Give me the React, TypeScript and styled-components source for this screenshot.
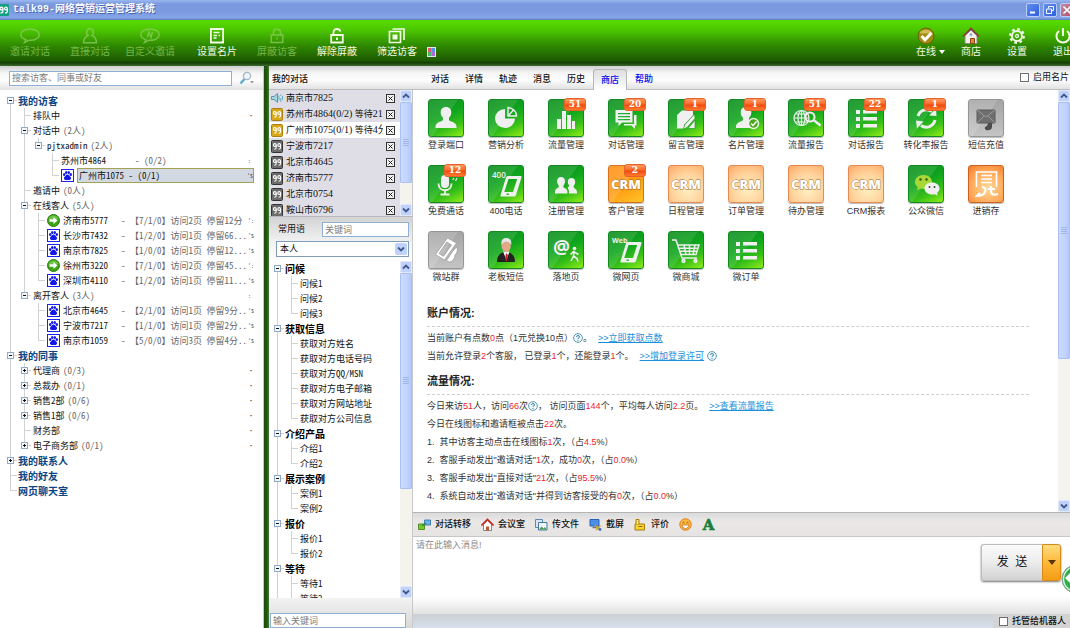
import React from "react";
import styled, { createGlobalStyle, css } from "styled-components";

const sans = `"Liberation Sans", "Noto Sans CJK SC", sans-serif`;
const mono = `"Noto Sans Mono CJK SC", "Noto Sans CJK SC", monospace`;
const serif = `"Liberation Serif", "Noto Sans CJK SC", serif`;

const Global = createGlobalStyle`
  * { box-sizing: border-box; }
  html, body { margin: 0; height: 100%; overflow: hidden; background: #fff; }
  body { font: 9px/15px ${sans}; color: #111; }
  #root { height: 100%; }
  ul, ol { list-style: none; margin: 0; padding: 0; }
  button { font: inherit; color: inherit; border: 0; padding: 0; background: none; cursor: pointer; }
  input, select, textarea { font: inherit; color: inherit; margin: 0; border-radius: 0; }
  svg { display: block; flex: none; }
`;

const Window = styled.div`
  display: flex;
  flex-direction: column;
  height: 100vh;
  overflow: hidden;
`;

/* ---------- title bar ---------- */

const TitleBar = styled.header`
  display: flex;
  align-items: center;
  flex: none;
  height: 20px;
  background: linear-gradient(#9ab8f0, #7a98de 20%, #7b9ae0 60%, #86a6ea 90%, #5878b8);
  overflow: hidden;
`;

const AppName = styled.h1`
  flex: 1;
  margin: 0 0 0 4px;
  font: bold 10px/18px "Liberation Mono", "Noto Sans CJK SC", monospace;
  color: #f4f8ff;
  text-shadow: 1px 1px 0 #4a66b0;
`;

const WindowButtons = styled.div`
  display: flex;
  gap: 3px;
  margin-right: -4px;
`;

const WindowButton = styled.button<{ $close?: boolean }>`
  display: grid;
  place-items: center;
  width: 14px;
  height: 14px;
  border: 1px solid #b8cdf8;
  border-radius: 2px;
  background: ${(p) =>
    p.$close ? "linear-gradient(135deg, #c98aa0, #a8506c)" : "linear-gradient(135deg, #5f8df2, #2f5fdc)"};
`;

/* ---------- main toolbar ---------- */

const Toolbar = styled.nav`
  display: flex;
  flex: none;
  height: 46px;
  background: linear-gradient(#58dc00, #4cc600 22%, #2f8a00 55%, #1d5a02 88%, #123c04 93%, #3f6b30);
`;

const ToolGroup = styled.div`
  display: flex;
  margin-right: 7px;
`;

const ToolSpacer = styled.div`
  flex: 1;
`;

const RightTools = styled.div`
  display: flex;
  margin-right: -16px;
`;

const Tool = styled.button<{ $width?: number; $start?: boolean }>`
  display: flex;
  flex-direction: column;
  align-items: ${(p) => (p.$start ? "flex-start" : "center")};
  flex: none;
  width: ${(p) => p.$width ?? 60}px;
  padding-top: 7px;
  font-size: 10px;
  line-height: 14px;
  white-space: nowrap;
  color: #f2fbe6;
  &:disabled {
    color: #8ccc64;
    opacity: 0.75;
  }
`;

const ToolIcon = styled.span`
  display: grid;
  place-items: center;
  width: 20px;
  height: 18px;
`;

const ToolLabel = styled.span`
  display: flex;
  align-items: center;
  gap: 3px;
`;

const PaletteButton = styled.button`
  align-self: flex-end;
  padding-bottom: 9px;
`;

/* ---------- workspace ---------- */

const Workspace = styled.div`
  display: flex;
  flex: 1;
  min-height: 0;
`;

const barFill = "linear-gradient(#cfcfcf, #f6f6f6 30%, #fdfdfd 60%, #e2e2e2)";

const VisitorPanel = styled.aside`
  flex: none;
  width: 264px;
  border-right: 1px solid #c4c8c0;
  background: #fff;
`;

const SearchBar = styled.form`
  display: flex;
  align-items: center;
  gap: 7px;
  height: 24px;
  padding: 0 9px;
  background: ${barFill};
`;

const TextInput = styled.input`
  min-width: 0;
  height: 15px;
  padding: 0 2px;
  border: 1px solid #8fb0d4;
  background: #fff;
  line-height: 13px;
  outline: 0;
  &::placeholder {
    color: #7c7c7c;
    opacity: 1;
  }
`;

const SearchInput = styled(TextInput)`
  width: 224px;
`;

const Divider = styled.div`
  flex: none;
  width: 5px;
  background: linear-gradient(90deg, #1c4a0a, #1f5c0a 60%, #4c7a3c);
`;

/* ---------- trees ---------- */

const Tree = styled.ul`
  padding: 3px 9px 0 4px;
  font-family: ${mono};
`;

const TreeRow = styled.li`
  display: flex;
  align-items: center;
  height: 15px;
  white-space: nowrap;
`;

const line = "linear-gradient(#d2d2d2, #d2d2d2) no-repeat";
const guides: Record<string, string> = {
  " ": "none",
  "|": `${line} 6px 0 / 1px 100%`,
  T: `${line} 6px 0 / 1px 100%, ${line} 6px 7px / 7px 1px`,
  L: `${line} 6px 0 / 1px 8px, ${line} 6px 7px / 7px 1px`,
  F: `${line} 6px 7px / 1px 8px, ${line} 6px 7px / 7px 1px`,
};

const Guide = styled.span<{ $kind: string }>`
  display: flex;
  align-items: center;
  flex: none;
  width: 14px;
  height: 15px;
  padding-left: 3px;
  background: ${(p) => guides[p.$kind]};
`;

const Toggle = styled.button`
  display: block;
  width: 7px;
  height: 7px;
`;

const TreeText = styled.span<{ $heading?: string }>`
  display: flex;
  align-items: center;
  gap: 3px;
  flex: 1;
  min-width: 0;
  padding-left: 1px;
  ${(p) =>
    p.$heading &&
    css`
      padding-left: 0;
      font-weight: bold;
      font-size: 10px;
      color: ${p.$heading};
    `}
`;

const VisitorName = styled.span<{ $wide?: boolean }>`
  flex: none;
  width: ${(p) => (p.$wide ? 71 : 55)}px;
`;

const Muted = styled.span`
  color: #666;
`;

const Mark = styled.span`
  flex: none;
  width: 6px;
  font-size: 6px;
  color: #333;
`;

const Selected = styled.span`
  display: flex;
  align-items: center;
  flex: 1;
  height: 15px;
  border: 1px solid #a3a356;
  background: #d3d9e3;
  line-height: 13px;
`;

/* ---------- scrollbars ---------- */

const ScrollTrack = styled.div`
  display: flex;
  flex-direction: column;
  flex: none;
  width: 12px;
  background: #f4f3ee;
`;

const ScrollArrow = styled.button`
  display: grid;
  place-items: center;
  flex: none;
  height: 12px;
  border: 1px solid #dfe8fd;
  border-radius: 2px;
  background: #c0d2fa;
`;

const ScrollThumb = styled.div<{ $grow: number }>`
  display: grid;
  place-items: center;
  flex: ${(p) => p.$grow} 0 0;
  border: 1px solid #a9c0f0;
  border-radius: 1px;
  background: linear-gradient(90deg, #cbdafd, #c2d4fc 60%, #b2c8f6);
`;

const ScrollRest = styled.div<{ $grow: number }>`
  flex: ${(p) => p.$grow} 0 0;
`;

/* ---------- conversations and phrases ---------- */

const Main = styled.div`
  display: flex;
  flex-direction: column;
  flex: 1;
  min-width: 0;
`;

const HeaderBar = styled.div`
  display: flex;
  align-items: flex-end;
  flex: none;
  height: 24px;
  background: ${barFill};
  border-bottom: 1px solid #bdbdbd;
`;

const PanelTitle = styled.h2`
  flex: none;
  width: 154px;
  margin: 0;
  padding-left: 3px;
  font: 500 9px/20px ${sans};
`;

const Columns = styled.div`
  display: flex;
  flex: 1;
  min-height: 0;
`;

const TalkPanel = styled.section`
  display: flex;
  flex-direction: column;
  flex: none;
  width: 144px;
  border-right: 1px solid #c9c9c9;
`;

const TalkArea = styled.div`
  display: flex;
  flex: none;
  height: 127px;
  overflow: hidden;
  border-bottom: 1px solid #b8b8c0;
`;

const TalkList = styled.ul`
  flex: 1;
  min-width: 0;
  background: #dfdee6;
`;

const TalkRow = styled.li<{ $active?: boolean }>`
  display: flex;
  align-items: center;
  gap: 3px;
  height: 16px;
  padding: 0 5px 0 2px;
  background: ${(p) => (p.$active ? "#fff" : "transparent")};
`;

const TalkName = styled.span`
  flex: 1;
  min-width: 0;
  overflow: hidden;
  white-space: nowrap;
  font-family: ${serif};
`;

const Figures = styled.span`
  font-size: 10px;
`;

const PhraseTools = styled.div`
  display: grid;
  grid-template-columns: 46px 1fr;
  grid-template-rows: 15px 16px;
  gap: 4px 0;
  flex: none;
  height: 44px;
  padding: 5px 3px 0 7px;
  background: linear-gradient(#d3d3d3, #f4f4f4 60%, #fff);
`;

const PhraseLabel = styled.label`
  padding-left: 2px;
`;

const PhraseSelect = styled.select`
  appearance: none;
  height: 16px;
  padding: 0 3px;
  border: 1px solid #7f9db9;
  background: #fff;
`;

const SelectBox = styled.div`
  display: grid;
  grid-column: 1 / 3;
  align-items: center;
  & > * { grid-area: 1 / 1; }
`;

const SelectArrow = styled.span`
  display: grid;
  place-items: center;
  justify-self: end;
  width: 12px;
  height: 12px;
  margin-right: 2px;
  border-radius: 2px;
  background: #c0d2fa;
  pointer-events: none;
`;

const PhraseArea = styled.div`
  display: flex;
  flex: 1;
  min-height: 0;
`;

const PhraseTree = styled(Tree)`
  flex: 1;
  padding: 0 0 0 2px;
  overflow: hidden;
`;

const PhraseFooter = styled.div`
  display: flex;
  align-items: flex-end;
  flex: none;
  height: 30px;
  padding: 0 6px 0 1px;
  background: linear-gradient(#f2f2f2, #d8d8d8);
  & > input { flex: 1; }
`;

/* ---------- shop page ---------- */

const Tabs = styled.div`
  display: flex;
  align-items: flex-end;
  flex: 1;
  height: 23px;
`;

const Tab = styled.button<{ $active?: boolean; $link?: boolean }>`
  width: 34px;
  height: 20px;
  font-weight: 500;
  color: ${(p) => (p.$link ? "#0a0af0" : "#111")};
  ${(p) =>
    p.$active &&
    css`
      height: 21px;
      margin-bottom: -1px;
      border: 1px solid #b5b5b5;
      border-bottom: 0;
      border-radius: 3px 3px 0 0;
      background: linear-gradient(#dedede, #fff);
    `}
`;

const CheckLabel = styled.label`
  display: flex;
  align-items: center;
  gap: 4px;
  white-space: nowrap;
  & > input {
    appearance: none;
    width: 9px;
    height: 9px;
    border: 1px solid #6f6f6f;
    background: #fff;
  }
`;

const CardCheck = styled(CheckLabel)`
  height: 23px;
  padding-right: 1px;
`;

const ChatPanel = styled.section`
  display: flex;
  flex-direction: column;
  flex: 1;
  min-width: 0;
`;

const ShopArea = styled.div`
  display: flex;
  flex: 1;
  min-height: 0;
`;

const ShopPage = styled.div`
  flex: 1;
  min-width: 0;
  overflow: hidden;
  color: #333;
`;

const Tiles = styled.ul`
  display: grid;
  grid-template-columns: repeat(10, 60px);
  grid-auto-rows: 66px;
  padding: 9px 0 3px 3px;
`;

const Tile = styled.li`
  display: flex;
  flex-direction: column;
  align-items: center;
  line-height: 13px;
  white-space: nowrap;
`;

const tileFill = {
  green: css`
    border: 1px solid #118a22;
    background: linear-gradient(125deg, #ffffff1c 48%, transparent 49%),
      linear-gradient(155deg, #0a8c1c, #10a61e 45%, #38c018 72%, #90ee18);
  `,
  orange: css`
    border: 1px solid #d8701c;
    background: linear-gradient(125deg, #ffffff24 48%, transparent 49%),
      linear-gradient(155deg, #ff8c10, #ff9c14 55%, #ffc428);
  `,
  pale: css`
    border: 1px solid #e88a50;
    background: radial-gradient(circle at 55% 65%, #fff0c4, #ffd29a 55%, #ffa868);
  `,
  gray: css`
    border: 1px solid #969696;
    background: linear-gradient(125deg, #ffffff24 48%, transparent 49%), linear-gradient(#a4a4a4, #c4c4c4);
  `,
  stock: css`
    border: 1px solid #d0601c;
    background: radial-gradient(circle at 55% 60%, #ffd898, #ffa858 60%, #ee7c2c);
  `,
};
type Fill = keyof typeof tileFill;

const TileButton = styled.button<{ $fill: Fill }>`
  position: relative;
  width: 36px;
  height: 38px;
  border-radius: 3px;
  margin-bottom: 2px;
  box-shadow: 0 1px 1px #0004;
  ${(p) => tileFill[p.$fill]}
`;

const Badge = styled.span`
  position: absolute;
  top: -2px;
  right: -3px;
  width: 22px;
  height: 13px;
  border: 1px solid #e8602a;
  border-radius: 3px;
  background: linear-gradient(#ff9a60, #f86a28 45%, #f04a10 55%, #ff7a30);
  color: #fff;
  font: bold 9px/11px "DejaVu Serif", serif;
  text-align: center;
`;

const Report = styled.section`
  margin: 0 29px 3px 14px;
`;

const ReportTitle = styled.h3`
  margin: 0 0 2px;
  border-bottom: 1px dashed #cfcfcf;
  font: bold 11px/26px ${sans};
  color: #222;
`;

const ReportLine = styled.p`
  display: flex;
  align-items: center;
  margin: 0;
  line-height: 18px;
  white-space: pre;
`;

const Red = styled.b`
  font-weight: 500;
  color: #f01c2c;
`;

const ReportLink = styled.a`
  margin: 0 3px 0 6px;
  color: #1a90dc;
  text-decoration: underline;
`;

/* ---------- composer ---------- */

const ComposerTools = styled.div`
  display: flex;
  align-items: center;
  flex: none;
  gap: 10px;
  height: 25px;
  padding-left: 5px;
  border-top: 1px solid #b4b4b4;
  border-bottom: 1px solid #c6c6c6;
  background: linear-gradient(#dcdcdc, #ebe7e7 40%, #e6e3e3);
`;

const ComposerTool = styled.button`
  display: flex;
  align-items: center;
  gap: 4px;
  font-weight: 500;
`;

const Composer = styled.div`
  display: flex;
  align-items: flex-start;
  flex: none;
  height: 60px;
  overflow: hidden;
`;

const Message = styled.textarea`
  flex: 1;
  height: 60px;
  padding: 1px 3px;
  border: 0;
  outline: 0;
  resize: none;
  line-height: 15px;
  &::placeholder {
    color: #8c8c8c;
    opacity: 1;
  }
`;

const SendGroup = styled.div`
  display: flex;
  flex: none;
  height: 37px;
  margin: 7px 0 0;
  border-radius: 3px;
  box-shadow: 0 1px 2px #0008;
`;

const SendButton = styled.button`
  width: 61px;
  border: 1px solid #bcbcbc;
  border-right: 0;
  border-radius: 3px 0 0 3px;
  background: linear-gradient(#fbfbfb, #ececec 50%, #d2d2d2);
  font-size: 12px;
  font-weight: 400;
  white-space: pre;
`;

const SendMore = styled.button`
  display: grid;
  place-items: center;
  width: 19px;
  border: 1px solid #d88a18;
  border-radius: 0 3px 3px 0;
  background: linear-gradient(#ffdc80, #fdb838 50%, #f59c14);
`;

const FloatBall = styled.button`
  flex: none;
  align-self: flex-end;
  width: 30px;
  height: 36px;
  margin-right: -21px;
`;

const ComposerFade = styled.div`
  flex: none;
  height: 17px;
  background: linear-gradient(#fff, #e2e2e2);
`;

const StatusBar = styled.footer`
  display: flex;
  justify-content: flex-end;
  flex: none;
  height: 14px;
  background: linear-gradient(#cdd0d4, #d6dfea);
`;

const RobotCheck = styled(CheckLabel)`
  padding: 0 4px 0 6px;
  background: #d4d4d4;
  font-weight: 500;
`;

/* ---------- small drawings ---------- */

const Chevron = ({ up }: { up?: boolean }) => (
  <svg width="8" height="6" viewBox="0 0 8 6">
    <path d={up ? "M1 4.5 4 1.5 7 4.5" : "M1 1.5 4 4.5 7 1.5"} fill="none" stroke="#40588c" strokeWidth="1.8" />
  </svg>
);

const Scroll = ({ thumb, rest }: { thumb: number; rest: number }) => (
  <ScrollTrack>
    <ScrollArrow aria-label="向上"><Chevron up /></ScrollArrow>
    <ScrollThumb $grow={thumb}>
      <svg width="6" height="7" viewBox="0 0 6 7">
        <path d="M0 .5h6M0 2.5h6M0 4.5h6M0 6.5h6" stroke="#9db6ec" />
      </svg>
    </ScrollThumb>
    <ScrollRest $grow={rest} />
    <ScrollArrow aria-label="向下"><Chevron /></ScrollArrow>
  </ScrollTrack>
);

const ToggleBox = ({ open }: { open: boolean }) => (
  <Toggle aria-label={open ? "折叠" : "展开"}>
    <svg width="7" height="7" viewBox="0 0 7 7">
      <rect x=".5" y=".5" width="6" height="6" fill="#f4f7fb" stroke="#8fa9c6" />
      <path d={open ? "M2 3.5h3" : "M2 3.5h3M3.5 2v3"} stroke="#111" />
    </svg>
  </Toggle>
);

const Paw = () => (
  <svg width="13" height="13" viewBox="0 0 13 13">
    <rect x=".5" y=".5" width="12" height="12" fill="#fff" stroke="#1c22f0" />
    <g fill="#1218e8">
      <ellipse cx="3.2" cy="5.6" rx="1.2" ry="1.5" />
      <ellipse cx="5.2" cy="3.4" rx="1.2" ry="1.5" />
      <ellipse cx="7.8" cy="3.4" rx="1.2" ry="1.5" />
      <ellipse cx="9.8" cy="5.6" rx="1.2" ry="1.5" />
      <path d="M6.5 5.4c1.6 0 2 1.6 3.1 2.7 1 1.2.4 2.8-1 2.8H4.4c-1.4 0-2-1.6-1-2.8C4.5 7 4.9 5.4 6.5 5.4Z" />
    </g>
  </svg>
);

const Direct = () => (
  <svg width="13" height="13" viewBox="0 0 13 13">
    <circle cx="6.5" cy="6.5" r="6" fill="#3aa414" stroke="#2c7c10" />
    <path d="M1.5 5.5a5 4 0 0 1 10 0Z" fill="#8ad860" opacity=".6" />
    <path d="M2.5 5.2h4V3l4 3.5-4 3.5V7.8h-4Z" fill="#fff" />
  </svg>
);

const TalkIcon = ({ kind }: { kind: string }) =>
  kind === "sound" ? (
    <svg width="12" height="12" viewBox="0 0 12 12">
      <path d="M.5 4.5h2.500l3.500-3v9l-3.500-3H.5Z" fill="#a8d4e0" stroke="#5a98ac" />
      <path d="M8 3.500v5M9.800 2.500v1.500M9.800 6v4M11.500 4v4" stroke="#62b0c8" />
    </svg>
  ) : (
    <svg width="12" height="13" viewBox="0 0 12 13">
      <rect x=".5" y=".5" width="11" height="12" rx="1" fill={kind === "gold" ? "#d8a818" : "#6c6c6c"} stroke={kind === "gold" ? "#a88010" : "#333"} />
      <g fill="none" stroke="#fff" strokeWidth="1.1">
        <circle cx="3.8" cy="5" r="1.4" />
        <path d="M5.2 5v2.500q0 1.800-2 1.800" />
        <circle cx="8.2" cy="5" r="1.4" />
        <path d="M9.6 5v2.500q0 1.800-2 1.800" />
      </g>
    </svg>
  );

const CloseBox = () => (
  <button aria-label="关闭">
    <svg width="9" height="9" viewBox="0 0 9 9">
      <rect x=".5" y=".5" width="8" height="8" fill="#f2f2f2" stroke="#333" />
      <path d="M2.5 2.5l4 4M6.5 2.5l-4 4" stroke="#222" />
    </svg>
  </button>
);

const Help = () => (
  <svg width="10" height="10" viewBox="0 0 10 10">
    <circle cx="5" cy="5" r="4.4" fill="#eef8fc" stroke="#5f9cb4" />
    <path d="M3.500 4q0-1.500 1.500-1.500T6.500 4q0 .8-1.500 1.400v.6M5 7v1" fill="none" stroke="#3c84a4" />
  </svg>
);

const stroke = { fill: "none", stroke: "currentColor", strokeWidth: 1.5 };
const toolIcons: Record<string, React.ReactNode> = {
  bubble: <path {...stroke} d="M4.500 15.500 6 12.600C2.500 11.600.8 9.800.8 7.800.8 4.600 4.500 2 10 2s9.200 2.600 9.200 5.800S15.500 13.500 9 13.200Z" />,
  person: (
    <g {...stroke}>
      <path d="M10 1.500a3.600 3.900 0 0 1 2 7c2.500 1 4.300 2.500 4.500 7.200H3.500C3.700 11 5.500 9.500 8 8.500a3.600 3.900 0 0 1 2-7Z" />
    </g>
  ),
  custom: (
    <g {...stroke}>
      <path d="M4.500 15.500 6 12.600C2.500 11.600.8 9.800.8 7.800.8 4.600 4.500 2 10 2s9.200 2.600 9.200 5.800S15.500 13.500 9 13.200Z" />
      <path d="M7.500 10.500 8.800 5l2.200 5.500L12.500 5" />
    </g>
  ),
  card: (
    <g {...stroke} strokeWidth="1.8">
      <path d="M3.900 2h12.200v13.500H3.900Z" />
      <path d="M6.500 5.500h6M6.500 8.500h3.500M11.500 8.500h1.500M6.500 11h3" strokeWidth="1.3" />
    </g>
  ),
  lock: (
    <g {...stroke}>
      <path d="M4.200 8h11.600v7.500H4.200ZM6.500 8V5.500Q6.500 2 10 2t3.500 3.500V8M10 10.500v2" />
    </g>
  ),
  unlock: (
    <g {...stroke} strokeWidth="1.8">
      <path d="M4.200 8h11.600v7.500H4.200ZM6.500 8V5.500Q6.500 2 10 2q2.800 0 3.400 2.500M10 10.500v2.500" />
    </g>
  ),
  filter: (
    <g {...stroke} strokeWidth="1.7">
      <path d="M2.500 4.500h11v11h-11ZM5.500 2h11.500v11" />
      <path d="M5.500 7.500h5v5h-5Z" fill="currentColor" stroke="none" />
    </g>
  ),
  online: (
    <g>
      <circle cx="10" cy="9" r="8" fill="#a08a10" stroke="#6c6208" />
      <path d="M3.500 6.500a7 6 0 0 1 13 0Z" fill="#e0d070" opacity=".7" />
      <path d="m5.500 9 3.500 3.800L15.500 6" fill="none" stroke="#fff" strokeWidth="3" />
    </g>
  ),
  shop: (
    <g>
      <path d="M4 8.500v8h12v-8L10 3Z" fill="#f6f0ea" stroke="#888" />
      <path d="m2 9.500 8-8 8 8" fill="none" stroke="#8c3a34" strokeWidth="1.6" />
      <path d="M9.500 11.500h4v5h-4Z" fill="#e08838" stroke="#8a4418" />
      <path d="M8.800 6.500h2.400v2.200H8.800Z" fill="#7aa0d0" />
    </g>
  ),
  gear: (
    <g fill="none" stroke="#eef8e4">
      <circle cx="10" cy="9" r="5" strokeWidth="2" />
      <circle cx="10" cy="9" r="1.5" strokeWidth="1.3" />
      <circle cx="10" cy="9" r="6.8" strokeWidth="2.2" strokeDasharray="2.7 2.64" />
    </g>
  ),
  power: (
    <g fill="none" stroke="#eef8e4" strokeWidth="2">
      <path d="M6 4a6.500 6.500 0 1 0 8 0M10 1v8" />
    </g>
  ),
};

const ToolGlyph = ({ name }: { name: string }) => (
  <ToolIcon>
    <svg width="20" height="18" viewBox="0 0 20 18">{toolIcons[name]}</svg>
  </ToolIcon>
);

const CrmText = (
  <text x="17" y="23" textAnchor="middle" fontFamily="Open Sans" fontWeight="800" fontSize="13" fill="#fff" stroke="#a0642a" strokeWidth=".8" paintOrder="stroke">CRM</text>
);

const phone = (
  <g>
    <path d="M19 10h12.500q1.500 0 1 1.500L27 29q-.5 1.500-2 1.500H12.500q-1.500 0-1-1.500L17 11.500q.5-1.500 2-1.500ZM19.500 13l-4.200 13h8.700l4.200-13Z" fillRule="evenodd" />
    <path d="M17.500 28.200h2.500" stroke="#2a9a20" strokeWidth="1.2" />
  </g>
);

const list = (
  <path d="M7 10h4v4H7ZM14 10h14v3.500H14ZM7 17h4v4H7ZM14 17h14v3.500H14ZM7 24h4v4H7ZM14 24h14v3.500H14Z" />
);

const tileIcons: Record<string, React.ReactNode> = {
  user: <path d="M17 7c3.500 0 5.300 2.300 5.300 5.500 0 2.400-1 4-2.300 5.300v2.200c0 1.600 7.500 1.800 7.500 6.500v1.500h-21v-1.500c0-4.700 7.500-4.900 7.500-6.500v-2.200c-1.300-1.300-2.300-2.900-2.300-5.300C11.700 9.300 13.500 7 17 7Z" />,
  pie: (
    <g>
      <path d="M16 9v9.500h10A10 9.500 0 1 1 16 9Z" />
      <path d="M19 7.500c5 .5 8.500 4 8.500 8.500l-8.500 0ZM19 16l5.500-6" fill="none" stroke="#eee" strokeWidth="1.4" />
    </g>
  ),
  bars: <path d="M8 19h4v10H8ZM13 11h4v18h-4ZM18 15h4v14h-4ZM23 21h3v8h-3Z" />,
  chat: (
    <g>
      <path d="M6.500 10h17v12.500H13L9.500 26v-3.500h-3ZM9 13v1.300h12V13ZM9 16v1.300h12V16ZM9 19v1.300h12V19Z" fillRule="evenodd" />
      <path d="M25 15h2.500v10.500H26V29l-3.500-3.500H15V24h10Z" />
    </g>
  ),
  note: (
    <g>
      <path d="M8 15l5-4.500h11v5L15 25v3.500H8ZM13 11v4.500H8.500Z" />
      <path d="m25.500 14-10 11-1 4 3.500-1.500 8-9ZM26 20l-7 8.500h7Z" stroke="#2a9a20" strokeWidth=".7" />
    </g>
  ),
  usercheck: (
    <g>
      <path d="M17 7c3.500 0 5.300 2.300 5.300 5.500 0 2.400-1 4-2.300 5.300v2.200l2 2v6H7v-1.500c0-4.700 7-4.900 7-6.500v-2.200c-1.300-1.300-2.300-2.900-2.300-5.300C11.700 9.300 13.500 7 17 7Z" />
      <circle cx="24.5" cy="23.5" r="5" fill="#4aaa1c" stroke="#f2f2f2" strokeWidth="1.4" />
      <path d="m22 23.500 2 2 3.500-4" fill="none" stroke="#fff" strokeWidth="1.5" />
    </g>
  ),
  globe: (
    <g fill="none" stroke="#eee" strokeWidth="1.2">
      <circle cx="12.5" cy="18" r="7.5" />
      <ellipse cx="12.5" cy="18" rx="3.5" ry="7.5" />
      <path d="M5 18h15M6.500 14h12M6.500 22h12M12.500 10.500v15" />
      <circle cx="21" cy="17" r="4.5" strokeWidth="2" />
      <path d="m24.500 20 7 5.500" strokeWidth="2.5" />
    </g>
  ),
  list,
  cycle: (
    <g fill="none" stroke="#eee" strokeWidth="3">
      <path d="M9 16a9 9 0 0 1 14-4.500M26 20a9 9 0 0 1-14 5.500" />
      <path d="M20 15.500 27.500 16 27 8.500ZM14.500 21.500 7 20.500 8 28.500Z" fill="#eee" stroke="none" />
    </g>
  ),
  mail: (
    <g>
      <path d="M8 10h18v13H8Z" fill="#6e6e6e" stroke="#5a5a5a" />
      <path d="m8 10 9 7 9-7M8 23l7-7M26 23l-7-7" fill="none" stroke="#9a9a9a" />
      <path d="M19 23c0 4-4 3-3 6 1 2 7 2 7-2v-4Z" fill="#4c4c4c" />
    </g>
  ),
  mic: (
    <g>
      <rect x="12" y="9" width="8" height="13" rx="4" />
      <path d="M9.500 17.500c0 9 13 9 13 0M16 24v4M11.500 28.500h9" fill="none" stroke="#eee" strokeWidth="1.8" />
      <path d="m23.500 14 1.500-2M26.500 15l1.500-3" stroke="#eee" strokeWidth="1.2" />
    </g>
  ),
  phone400: (
    <g>
      {phone}
      <text x="3" y="12" fontFamily="Open Sans" fontWeight="600" fontSize="8">400</text>
    </g>
  ),
  phoneweb: (
    <g>
      {phone}
      <text x="3" y="11" fontFamily="Open Sans" fontWeight="700" fontSize="7">Web</text>
    </g>
  ),
  users: (
    <path d="M12 11c2.500 0 4 1.700 4 4.300 0 1.800-.8 3-1.600 4V21c0 1.200 4 1.200 4 5v1.500H6V26c0-3.800 3.700-3.800 3.700-5v-1.700c-.8-1-1.600-2.200-1.600-4C8.100 12.700 9.500 11 12 11ZM22.500 12c2.300 0 3.700 1.600 3.700 4 0 1.600-.7 2.800-1.500 3.700v1.500c0 1.200 3.300 1.500 3.300 4.800v1.500h-8V26c0-2.200-.8-3.300-1.500-4.500.8-.6 1.800-.9 1.800-1.800-.8-.9-1.500-2.100-1.500-3.700 0-2.400 1.400-4 3.700-4Z" />
  ),
  crm: CrmText,
  wechat: (
    <g>
      <path d="M14.500 9c5 0 8.500 3 8.500 7s-3.500 7-8.500 7c-1 0-2-.2-3-.5L8 24.500l.8-3.400C7 19.800 6 18 6 16c0-4 3.500-7 8.500-7Z" fill="#a8d838" />
      <circle cx="11.5" cy="13.5" r="1.2" fill="#2a5a10" />
      <circle cx="17.5" cy="13.5" r="1.2" fill="#2a5a10" />
      <path d="M23 16.500c4.300 0 7.500 2.600 7.500 6 0 1.800-1 3.400-2.500 4.500l.7 2.700-3-1.500c-4.800 1.200-10.200-1.200-10.200-5.700 0-3.400 3.200-6 7.500-6Z" />
      <circle cx="20.5" cy="21" r="1" fill="#444" />
      <circle cx="25.5" cy="21" r="1" fill="#444" />
    </g>
  ),
  stock: (
    <g fill="none" stroke="#fff" strokeWidth="1.6">
      <path d="M7.500 21V6h20v15M12 9.500h11M12 13h11M12 16.500h11" />
      <path d="M13 21q5 1 3 5t-8 4l3-3M22 20v5q0 5 7 3M19 23h7" strokeWidth="2.2" />
    </g>
  ),
  handphone: (
    <g fill="#fff" stroke="#8a8a8a" strokeWidth=".6">
      <path d="M18.500 6 27.500 11 15.500 28 6.500 22.500ZM17.800 10l-7.800 11.500 4.500 2.800L22.500 13Z" fillRule="evenodd" />
      <path d="M27.500 15c2 3 0 6-1.500 8-.5 4-2.500 7-6 7l-2.500-1.500 6-9Z" />
    </g>
  ),
  boss: (
    <g>
      <path d="M8 30q0-9 9-10.500Q26 21 26 30Z" fill="#222" />
      <path d="M14 19.500 17.500 28 20.500 19.500Z" fill="#f4f4f4" />
      <path d="m17.500 21 1.400 2-.6 5-1 1.500-1-1.500.4-5Z" fill="#c81c28" />
      <ellipse cx="17.2" cy="14" rx="4.600" ry="6" fill="#e2a888" />
      <path d="M12.300 13q-.5-7 5-7t5 7q-2-3.500-5-3.500t-5 3.500Z" fill="#e6e6e6" />
    </g>
  ),
  at: (
    <g>
      <text x="4" y="22" fontFamily="Open Sans" fontWeight="700" fontSize="19">@</text>
      <circle cx="25.5" cy="16.5" r="1.8" />
      <path d="m25 19-.5 5 3.500 2.500 1 3M24.500 24l-2.500 5M21.500 22.500l3-3 5 3" fill="none" stroke="#eee" strokeWidth="1.6" />
    </g>
  ),
  cart: (
    <g fill="none" stroke="#eee">
      <path d="M3 8h4l6 18h15M9 13h21l-3 9.500H12M10.500 16.200h18M11.500 19.300h16M15 13l2 9.500M20.500 13v9.500M26 13l-2 9.500" strokeWidth="1.5" />
      <circle cx="14.5" cy="29" r="1.3" strokeWidth="1.7" />
      <circle cx="26.5" cy="29" r="1.3" strokeWidth="1.7" />
    </g>
  ),
};

const composerIcons: Record<string, React.ReactNode> = {
  transfer: (
    <g strokeWidth=".8">
      <path d="M.5 6h6v5.500h-6Z" fill="#7ac82c" stroke="#3c7c14" />
      <path d="M6.500 2h6v5h-6Z" fill="#6ab4e8" stroke="#2c6ca4" />
      <path d="m4 8 4-3" stroke="#2c8c3c" strokeWidth="1.5" />
    </g>
  ),
  home: (
    <g>
      <path d="M2.500 6.500v6h8v-6l-4-4Z" fill="#fff" stroke="#888" />
      <path d="M.5 7.500 6.500 1.500l6 6" fill="none" stroke="#c42820" strokeWidth="1.7" />
      <path d="M5 8.500h3v4H5Z" fill="#b85838" />
    </g>
  ),
  file: (
    <g>
      <path d="M.5 1.500h7v8h-7Z" fill="#d4e8f8" stroke="#5888b0" />
      <path d="M3.500 4.500h8.500v7.500H3.500Z" fill="#eef6fc" stroke="#4878a0" />
      <path d="m4 11.500 2.500-3 2 2 1.500-1.500 1.500 2.500Z" fill="#4a9c4a" />
    </g>
  ),
  screen: (
    <g>
      <path d="M1 1.500h9v6.500H1Z" fill="#4a90e8" stroke="#2860b8" />
      <path d="M3.500 9.500h4" stroke="#777" strokeWidth="1.5" />
      <path d="m6 7 5 5M11.500 7.500 7 12" stroke="#c8a028" strokeWidth="1.3" />
      <circle cx="11" cy="11.5" r="1.4" fill="#3870c8" />
    </g>
  ),
  rate: (
    <g>
      <path d="M1 6h9.500v6H1Z" fill="#f8d430" stroke="#a87c08" />
      <path d="M2 6V1.500h3V6" fill="#ffe870" stroke="#a87c08" />
      <path d="M4.500 8.500h4" stroke="#8a6408" />
    </g>
  ),
  smile: (
    <g>
      <circle cx="6.5" cy="6.5" r="5.7" fill="#ffb83c" stroke="#d87c14" />
      <path d="M3 7h7q-.5 3.500-3.500 3.500T3 7Z" fill="#fff" stroke="#b86410" strokeWidth=".7" />
      <path d="M3.500 5q1-1.500 2 0M7.500 5q1-1.500 2 0" fill="none" stroke="#8a4a10" />
    </g>
  ),
  font: <text x="6.5" y="12" textAnchor="middle" fontFamily="DejaVu Serif" fontWeight="700" fontSize="15" fill="#178038" stroke="#178038" strokeWidth=".6">A</text>,
};

/* ---------- data ---------- */

interface Node {
  guides: string;
  toggle?: "open" | "closed";
  text?: string;
  count?: string;
  heading?: boolean;
  icon?: "paw" | "direct";
  name?: string;
  detail?: string;
  wide?: boolean;
  selected?: boolean;
  mark?: string;
}

const visitors: Node[] = [
  { guides: "F", toggle: "open", text: "我的访客", heading: true },
  { guides: "|T", text: "排队中", mark: "·" },
  { guides: "|T", toggle: "open", text: "对话中", count: "(2人)" },
  { guides: "||L", toggle: "open", text: "pjtxadmin", count: "(2人)" },
  { guides: "|| T", name: "苏州市4864", detail: "- (0/2)", wide: true, mark: ":" },
  { guides: "|| L", icon: "paw", text: "广州市1075 - (0/1)", selected: true, mark: "'s" },
  { guides: "|T", text: "邀请中", count: "(0人)" },
  { guides: "|T", toggle: "open", text: "在线客人", count: "(5人)" },
  { guides: "||T", icon: "direct", name: "济南市5777", detail: "- 【7/1/0】访问2页 停留12分", mark: "':" },
  { guides: "||T", icon: "paw", name: "长沙市7432", detail: "- 【1/2/0】访问1页 停留66...", mark: "'s" },
  { guides: "||T", icon: "paw", name: "南京市7825", detail: "- 【1/0/0】访问1页 停留12...", mark: "'s" },
  { guides: "||T", icon: "direct", name: "徐州市3220", detail: "- 【7/1/0】访问2页 停留45...", mark: "':" },
  { guides: "||L", icon: "paw", name: "深圳市4110", detail: "- 【1/2/0】访问1页 停留11...", mark: "'s" },
  { guides: "|L", toggle: "open", text: "离开客人", count: "(3人)", mark: ":" },
  { guides: "| T", icon: "paw", name: "北京市4645", detail: "- 【2/1/0】访问1页 停留9分..", mark: "'s" },
  { guides: "| T", icon: "paw", name: "宁波市7217", detail: "- 【1/1/0】访问1页 停留2分..", mark: "'s" },
  { guides: "| L", icon: "paw", name: "南京市1059", detail: "- 【5/0/0】访问3页 停留4分..", mark: "'s" },
  { guides: "T", toggle: "open", text: "我的同事", heading: true },
  { guides: "|T", toggle: "closed", text: "代理商", count: "(0/3)", mark: "·" },
  { guides: "|T", toggle: "closed", text: "总裁办", count: "(0/1)", mark: "·" },
  { guides: "|T", toggle: "closed", text: "销售2部", count: "(0/6)", mark: "·" },
  { guides: "|T", toggle: "closed", text: "销售1部", count: "(0/6)", mark: "·" },
  { guides: "|T", text: "财务部", mark: "·" },
  { guides: "|L", toggle: "closed", text: "电子商务部", count: "(0/1)", mark: "·" },
  { guides: "T", toggle: "closed", text: "我的联系人", heading: true },
  { guides: "T", text: "我的好友", heading: true },
  { guides: "L", text: "网页聊天室", heading: true },
];

const talks = [
  { kind: "sound", city: "南京市", no: "7825" },
  { kind: "gold", city: "苏州市", no: "4864(0/2)", wait: " 等待", time: "21" },
  { kind: "gold", city: "广州市", no: "1075(0/1)", wait: " 等待", time: "4分", active: true },
  { kind: "gray", city: "宁波市", no: "7217" },
  { kind: "gray", city: "北京市", no: "4645" },
  { kind: "gray", city: "济南市", no: "5777" },
  { kind: "gray", city: "北京市", no: "0754" },
  { kind: "gray", city: "鞍山市", no: "6796" },
];

const phraseGroups: [string, string[]][] = [
  ["问候", ["问候1", "问候2", "问候3"]],
  ["获取信息", ["获取对方姓名", "获取对方电话号码", "获取对方QQ/MSN", "获取对方电子邮箱", "获取对方网站地址", "获取对方公司信息"]],
  ["介绍产品", ["介绍1", "介绍2"]],
  ["展示案例", ["案例1", "案例2"]],
  ["报价", ["报价1", "报价2"]],
  ["等待", ["等待1", "等待2"]],
];

const phrases: Node[] = phraseGroups.flatMap(([title, items], g) => [
  { guides: g === 0 ? "F" : "T", toggle: "open" as const, text: title, heading: true },
  ...items.map((text, i) => ({ guides: i === items.length - 1 ? "|L" : "|T", text })),
]);

const tiles: [string, string, Fill, string?][] = [
  ["登录端口", "user", "green"],
  ["营销分析", "pie", "green"],
  ["流量管理", "bars", "green", "51"],
  ["对话管理", "chat", "green", "20"],
  ["留言管理", "note", "green", "1"],
  ["名片管理", "usercheck", "green", "1"],
  ["流量报告", "globe", "green", "51"],
  ["对话报告", "list", "green", "22"],
  ["转化率报告", "cycle", "green", "1"],
  ["短信充值", "mail", "gray"],
  ["免费通话", "mic", "green", "12"],
  ["400电话", "phone400", "green"],
  ["注册管理", "users", "green"],
  ["客户管理", "crm", "orange", "2"],
  ["日程管理", "crm", "pale"],
  ["订单管理", "crm", "pale"],
  ["待办管理", "crm", "pale"],
  ["CRM报表", "crm", "pale"],
  ["公众微信", "wechat", "green"],
  ["进销存", "stock", "stock"],
  ["微站群", "handphone", "gray"],
  ["老板短信", "boss", "green"],
  ["落地页", "at", "green"],
  ["微网页", "phoneweb", "green"],
  ["微商城", "cart", "green"],
  ["微订单", "list", "green"],
];

const composerTools: [string, string][] = [
  ["transfer", "对话转移"],
  ["home", "会议室"],
  ["file", "传文件"],
  ["screen", "截屏"],
  ["rate", "评价"],
];

/* ---------- composed parts ---------- */

const TreeItem = ({ node, headingColor }: { node: Node; headingColor: string }) => (
  <TreeRow>
    {[...node.guides].map((kind, i) => (
      <Guide key={i} $kind={kind}>
        {node.toggle && i === node.guides.length - 1 && <ToggleBox open={node.toggle === "open"} />}
      </Guide>
    ))}
    <TreeText $heading={node.heading ? headingColor : undefined}>
      {node.icon === "paw" && <Paw />}
      {node.icon === "direct" && <Direct />}
      {node.selected ? (
        <Selected>
          <TreeText>{node.text}</TreeText>
          <Mark>{node.mark}</Mark>
        </Selected>
      ) : node.name ? (
        <>
          <VisitorName $wide={node.wide}>{node.name}</VisitorName>
          <Muted>{node.detail}</Muted>
        </>
      ) : (
        <>
          <span>{node.text}</span>
          {node.count && <Muted>{node.count}</Muted>}
        </>
      )}
    </TreeText>
    {node.mark && !node.selected && <Mark>{node.mark}</Mark>}
  </TreeRow>
);

const ToolItem = ({ icon, label, disabled }: { icon: string; label: string; disabled?: boolean }) => (
  <Tool disabled={disabled}>
    <ToolGlyph name={icon} />
    <ToolLabel>{label}</ToolLabel>
  </Tool>
);

export default function App() {
  return (
    <Window>
      <Global />
      <TitleBar>
        <svg width="9" height="12" viewBox="0 0 9 12">
          <rect x="-3" width="12" height="12" rx="1" fill="#14a080" />
          <g fill="none" stroke="#fff" strokeWidth="1.2">
            <circle cx="1.5" cy="4.5" r="1.4" />
            <path d="M2.900 4.500V7q0 2-2.500 2" />
            <circle cx="6" cy="4.5" r="1.4" />
            <path d="M7.400 4.500V7q0 2-2.500 2" />
          </g>
        </svg>
        <AppName>talk99-网络营销运营管理系统</AppName>
        <WindowButtons>
          <WindowButton aria-label="最小化">
            <svg width="10" height="10" viewBox="0 0 10 10"><path d="M2 7.500h5" stroke="#fff" strokeWidth="2" /></svg>
          </WindowButton>
          <WindowButton aria-label="还原">
            <svg width="10" height="10" viewBox="0 0 10 10"><path d="M3.500 3.500v-2h5v4h-2M1.500 4h5v4.500h-5Z" fill="none" stroke="#fff" /></svg>
          </WindowButton>
          <WindowButton $close aria-label="关闭">
            <svg width="10" height="10" viewBox="0 0 10 10"><path d="m1.500 1.500 7 7M8.500 1.500l-7 7" stroke="#fff" strokeWidth="1.6" /></svg>
          </WindowButton>
        </WindowButtons>
      </TitleBar>

      <Toolbar>
        <ToolGroup>
          <ToolItem icon="bubble" label="邀请对话" disabled />
          <ToolItem icon="person" label="直接对话" disabled />
          <ToolItem icon="custom" label="自定义邀请" disabled />
        </ToolGroup>
        <ToolItem icon="card" label="设置名片" />
        <ToolItem icon="lock" label="屏蔽访客" disabled />
        <ToolItem icon="unlock" label="解除屏蔽" />
        <ToolItem icon="filter" label="筛选访客" />
        <PaletteButton aria-label="配色">
          <svg width="9" height="10" viewBox="0 0 9 10">
            <rect width="9" height="10" fill="#e8e8f0" />
            <rect x="1" y="1" width="3.5" height="4" fill="#e05878" />
            <rect x="4.5" y="1" width="3.5" height="4" fill="#5890e8" />
            <rect x="1" y="5" width="3.5" height="4" fill="#48b868" />
            <rect x="4.5" y="5" width="3.5" height="4" fill="#b068d8" />
          </svg>
        </PaletteButton>
        <ToolSpacer />
        <RightTools>
          <Tool $width={32} $start>
            <ToolGlyph name="online" />
            <ToolLabel>
              在线
              <svg width="6" height="4" viewBox="0 0 6 4"><path d="M0 0h6L3 4Z" fill="#fff" /></svg>
            </ToolLabel>
          </Tool>
          <Tool $width={46}><ToolGlyph name="shop" />商店</Tool>
          <Tool $width={46}><ToolGlyph name="gear" />设置</Tool>
          <Tool $width={46}><ToolGlyph name="power" />退出</Tool>
        </RightTools>
      </Toolbar>

      <Workspace>
        <VisitorPanel>
          <SearchBar>
            <SearchInput aria-label="搜索" placeholder="搜索访客、同事或好友" />
            <button type="button" aria-label="搜索">
              <svg width="15" height="14" viewBox="0 0 15 14">
                <path d="m1.500 12.500 4.500-5" stroke="#58b0d0" strokeWidth="2.4" />
                <circle cx="8" cy="5" r="3.6" fill="#eef4f8" stroke="#a4b4c4" strokeWidth="1.2" />
                <path d="M11 10h4l-2 2.500Z" fill="#999" />
              </svg>
            </button>
          </SearchBar>
          <Tree>
            {visitors.map((node, i) => <TreeItem key={i} node={node} headingColor="#0b4584" />)}
          </Tree>
        </VisitorPanel>

        <Divider />

        <Main>
          <HeaderBar>
            <PanelTitle>我的对话</PanelTitle>
            <Tabs>
              {["对话", "详情", "轨迹", "消息", "历史", "商店", "帮助"].map((name, i) => (
                <Tab key={name} $active={i === 5} $link={i > 4}>{name}</Tab>
              ))}
            </Tabs>
            <CardCheck>
              <input type="checkbox" />
              启用名片
            </CardCheck>
          </HeaderBar>

          <Columns>
            <TalkPanel>
              <TalkArea>
                <TalkList>
                  {talks.map((t, i) => (
                    <TalkRow key={i} $active={t.active}>
                      <TalkIcon kind={t.kind} />
                      <TalkName>
                        {t.city}<Figures>{t.no}</Figures>{t.wait}<Figures>{t.time}</Figures>
                      </TalkName>
                      <CloseBox />
                    </TalkRow>
                  ))}
                </TalkList>
                <Scroll thumb={79} rest={21} />
              </TalkArea>
              <PhraseTools>
                <PhraseLabel htmlFor="phrase-key">常用语</PhraseLabel>
                <TextInput id="phrase-key" placeholder="关键词" />
                <SelectBox>
                  <PhraseSelect aria-label="范围" defaultValue="本人">
                    <option>本人</option>
                  </PhraseSelect>
                  <SelectArrow><Chevron /></SelectArrow>
                </SelectBox>
              </PhraseTools>
              <PhraseArea>
                <PhraseTree>
                  {phrases.map((node, i) => <TreeItem key={i} node={node} headingColor="#000" />)}
                </PhraseTree>
                <Scroll thumb={215} rest={98} />
              </PhraseArea>
              <PhraseFooter>
                <TextInput aria-label="关键词" placeholder="输入关键词" />
              </PhraseFooter>
            </TalkPanel>

            <ChatPanel>
              <ShopArea>
                <ShopPage>
                  <Tiles>
                    {tiles.map(([label, icon, fill, badge]) => (
                      <Tile key={label}>
                        <TileButton $fill={fill} aria-label={label}>
                          <svg width="34" height="36" viewBox="0 0 34 36" fill="#f0f0f0">{tileIcons[icon]}</svg>
                          {badge && <Badge>{badge}</Badge>}
                        </TileButton>
                        {label}
                      </Tile>
                    ))}
                  </Tiles>

                  <Report>
                    <ReportTitle>账户情况:</ReportTitle>
                    <ReportLine>
                      当前账户有点数<Red>0</Red>点（1元兑换10点）<Help />。<ReportLink href="#points">&gt;&gt;立即获取点数</ReportLink>
                    </ReportLine>
                    <ReportLine>
                      当前允许登录<Red>2</Red>个客服， 已登录<Red>1</Red>个，还能登录<Red>1</Red>个。<ReportLink href="#seats">&gt;&gt;增加登录许可</ReportLink><Help />
                    </ReportLine>
                  </Report>

                  <Report>
                    <ReportTitle>流量情况:</ReportTitle>
                    <ReportLine>
                      今日来访<Red>51</Red>人，访问<Red>66</Red>次<Help />， 访问页面<Red>144</Red>个，平均每人访问<Red>2.2</Red>页。<ReportLink href="#traffic">&gt;&gt;查看流量报告</ReportLink>
                    </ReportLine>
                    <ReportLine>今日在线图标和邀请框被点击<Red>22</Red>次。</ReportLine>
                    <ReportLine>1.  其中访客主动点击在线图标<Red>1</Red>次，（占<Red>4.5</Red>%）</ReportLine>
                    <ReportLine>2.  客服手动发出"邀请对话"<Red>1</Red>次，成功<Red>0</Red>次，（占<Red>0.0</Red>%）</ReportLine>
                    <ReportLine>3.  客服手动发出"直接对话"<Red>21</Red>次，（占<Red>95.5</Red>%）</ReportLine>
                    <ReportLine>4.  系统自动发出"邀请对话"并得到访客接受的有<Red>0</Red>次，（占<Red>0.0</Red>%）</ReportLine>
                  </Report>
                </ShopPage>
                <Scroll thumb={257} rest={142} />
              </ShopArea>

              <ComposerTools>
                {composerTools.map(([icon, label]) => (
                  <ComposerTool key={icon}>
                    <svg width="13" height="13" viewBox="0 0 13 13">{composerIcons[icon]}</svg>
                    {label}
                  </ComposerTool>
                ))}
                <ComposerTool aria-label="表情">
                  <svg width="13" height="13" viewBox="0 0 13 13">{composerIcons.smile}</svg>
                </ComposerTool>
                <ComposerTool aria-label="字体">
                  <svg width="13" height="13" viewBox="0 0 13 13">{composerIcons.font}</svg>
                </ComposerTool>
              </ComposerTools>
              <Composer>
                <Message aria-label="消息" placeholder="请在此输入消息!" />
                <SendGroup>
                  <SendButton>发  送</SendButton>
                  <SendMore aria-label="发送选项">
                    <svg width="8" height="5" viewBox="0 0 8 5"><path d="M0 0h8L4 5Z" fill="#5a3408" /></svg>
                  </SendMore>
                </SendGroup>
                <FloatBall aria-label="悬浮球">
                  <svg width="30" height="30" viewBox="0 0 30 30">
                    <circle cx="15" cy="15" r="14" fill="#2fae4c" stroke="#8a9a8c" />
                    <circle cx="15" cy="15" r="12.5" fill="none" stroke="#d4f0d8" strokeWidth="1.5" />
                    <path d="M4 14 10 8v4h12v5H10v3Z" fill="#fff" />
                  </svg>
                </FloatBall>
              </Composer>
              <ComposerFade />
              <StatusBar>
                <RobotCheck>
                  <input type="checkbox" />
                  托管给机器人
                </RobotCheck>
              </StatusBar>
            </ChatPanel>
          </Columns>
        </Main>
      </Workspace>
    </Window>
  );
}
